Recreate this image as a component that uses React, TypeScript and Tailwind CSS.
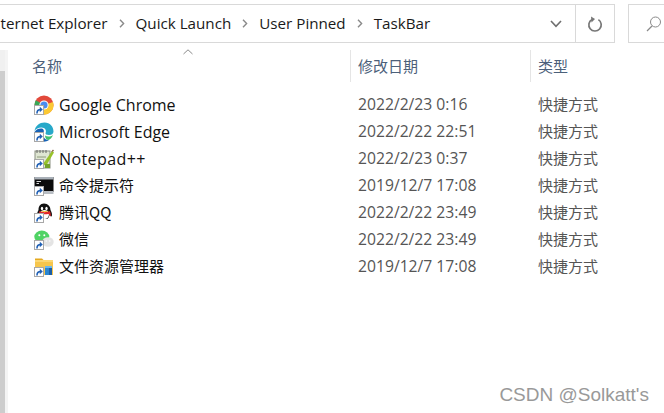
const ShortcutArrow = () => (
  <span className="absolute left-0 bottom-0 w-[10px] h-[10px] bg-white border border-[#a8a8a8] flex items-center justify-center">
    <svg width="8" height="8" viewBox="0 0 8 8">
      <path d="M1.2 7.4 C1.2 4.5 2.4 3 4.8 2.8 L4.8 0.8 L7.8 3.6 L4.8 6.2 L4.8 4.4 C3.6 4.4 2.8 5.2 2.8 7.4 Z" fill="#1f5fb4" />
    </svg>
  </span>
);

const ChromeIcon = () => (
  <svg width="20" height="20" viewBox="0 0 20 20">
    <circle cx="10" cy="10" r="9.5" fill="#e2493b" />
    <path d="M10 10 L1.8 5.2 A9.5 9.5 0 0 0 7 19 Z" fill="#3aa757" />
    <path d="M10 10 L19 7 A9.5 9.5 0 0 1 7 19.2 Z" fill="#fbc934" />
    <circle cx="10" cy="10" r="4.6" fill="#ffffff" />
    <circle cx="10" cy="10" r="3.6" fill="#4a8cf0" />
  </svg>
);

const EdgeIcon = () => (
  <svg width="20" height="20" viewBox="0 0 20 20">
    <path d="M0.5 9 C1.5 3.5 5.5 0.5 10.5 0.5 C16 0.5 19.5 4.5 19.5 9.5 C19.5 12 17.5 13 15 13 C12.5 13 11 12.3 11.6 11 C12.8 8.5 11 5.5 7.5 5.5 C4.5 5.5 2 7 0.5 9 Z" fill="#27a8c9" />
    <path d="M0.5 10 C2 7.5 4.5 6.5 7 6.5 C9.5 6.5 10.5 8.5 9.5 11 C8.5 14 10.5 18.5 15 18 C13.5 19.2 11.5 19.7 9.8 19.7 C4.5 19.7 0.5 15.5 0.5 10 Z" fill="#1763b6" />
    <path d="M11 13.5 C13 15 16.5 15 19 13 C18 15.5 16.5 17.5 14.5 18 C12.5 18 11 16 11 13.5 Z" fill="#3fc26f" />
  </svg>
);

const NotepadIcon = () => (
  <svg width="20" height="20" viewBox="0 0 20 20">
    <rect x="1" y="2" width="15" height="17" fill="#dfe6d2" stroke="#8a8f80" strokeWidth="1" />
    <path d="M3 1 V4 M6 1 V4 M9 1 V4 M12 1 V4" stroke="#666" strokeWidth="1" />
    <path d="M3 8 H12 M3 11 H10 M3 14 H11" stroke="#8d9a7b" strokeWidth="1" />
    <path d="M9 15 L18 2 L20 3.5 L12 17 Z" fill="#98c22a" />
    <path d="M17 3 L19 0.5 L20 2 Z" fill="#7a4b22" />
    <rect x="11" y="15" width="5" height="4" fill="#74a32a" />
  </svg>
);

const CmdIcon = () => (
  <svg width="20" height="20" viewBox="0 0 20 20">
    <rect x="0.5" y="1" width="19" height="15" fill="#0b0b0b" />
    <rect x="0.5" y="1" width="19" height="2.5" fill="#a9b0b8" />
    <path d="M2.5 5.5 H7 M2.5 7.5 H5" stroke="#d8d8d8" strokeWidth="1" />
    <rect x="0.5" y="15" width="19" height="3" fill="#b9bec4" />
  </svg>
);

const QQIcon = () => (
  <svg width="20" height="20" viewBox="0 0 20 20">
    <path d="M10 0.5 C6 0.5 4.5 3.5 4.5 7 C3 9.5 2.5 12.5 3.5 13.5 C4.5 13.5 5 12.5 5.5 12 C6 14.5 7 15.5 8 16 H13 C14 15.5 15 14.5 15.5 12 C16 12.5 16.5 13.5 17.5 13.5 C18.5 12.5 18 9.5 16.5 7 C16.5 3.5 14 0.5 10 0.5 Z" fill="#111111" />
    <ellipse cx="10.5" cy="11.5" rx="4.5" ry="4.5" fill="#ffffff" />
    <ellipse cx="8" cy="5.5" rx="1.2" ry="1.7" fill="#fff" />
    <ellipse cx="12.5" cy="5.5" rx="1.2" ry="1.7" fill="#fff" />
    <path d="M5.5 8 C8 9.5 13 9.5 16 8 L16.5 10 L17 13.5 L14.5 11 C11 11.5 8 11.5 5 10.5 Z" fill="#e2262a" />
    <path d="M7 7.5 C9 8.5 12.5 8.5 14.5 7.5 C12.5 9.5 9 9.5 7 7.5 Z" fill="#f5b417" />
  </svg>
);

const WeChatIcon = () => (
  <svg width="20" height="20" viewBox="0 0 20 20">
    <ellipse cx="7.8" cy="6.8" rx="7.5" ry="6.2" fill="#4fd364" />
    <path d="M4 11 L3.6 14.5 L7.5 12.5 Z" fill="#4fd364" />
    <circle cx="5.3" cy="5.3" r="1" fill="#fff" />
    <circle cx="10.3" cy="5.3" r="1" fill="#fff" />
    <ellipse cx="14" cy="12" rx="5.7" ry="4.8" fill="#e4e4e4" />
    <circle cx="12.2" cy="11" r="0.7" fill="#fff" />
    <circle cx="15.8" cy="11" r="0.7" fill="#fff" />
  </svg>
);

const FolderIcon = () => (
  <svg width="20" height="20" viewBox="0 0 20 20">
    <path d="M1 1.5 H8 L10 3.5 H1 Z" fill="#e5a91f" />
    <rect x="1" y="3" width="18" height="3" fill="#fbd774" />
    <rect x="1" y="5" width="18" height="13" fill="#f6c64d" />
    <rect x="11" y="9" width="4" height="9" fill="#2a86d1" />
    <rect x="15" y="9" width="3" height="9" fill="#1c5ea6" />
    <rect x="11" y="9" width="7" height="2" fill="#6db8ea" />
  </svg>
);

const files = [
  { name: "Google Chrome", date: "2022/2/23 0:16", font: "text-[16px] font-['Open_Sans']", icon: <ChromeIcon /> },
  { name: "Microsoft Edge", date: "2022/2/22 22:51", font: "text-[16px] font-['Open_Sans']", icon: <EdgeIcon /> },
  { name: "Notepad++", date: "2022/2/23 0:37", font: "text-[16px] tracking-[0.4px] font-['Open_Sans']", icon: <NotepadIcon /> },
  { name: "命令提示符", date: "2019/12/7 17:08", font: "text-[15px]", icon: <CmdIcon /> },
  { name: "腾讯QQ", date: "2022/2/22 23:49", font: "text-[15px]", icon: <QQIcon /> },
  { name: "微信", date: "2022/2/22 23:49", font: "text-[15px]", icon: <WeChatIcon /> },
  { name: "文件资源管理器", date: "2019/12/7 17:08", font: "text-[15px]", icon: <FolderIcon /> },
];

const crumbs = ["Quick Launch", "User Pinned", "TaskBar"];

const Chevron = () => (
  <svg width="6" height="9" viewBox="0 0 6 9" className="mx-[11px] shrink-0">
    <path d="M1 0.8 L4.6 4.5 L1 8.2" fill="none" stroke="#8a8a8a" strokeWidth="1.4" />
  </svg>
);

export default function App() {
  return (
    <div
      className="relative w-[664px] h-[413px] overflow-hidden bg-white text-[15px] text-black"
      style={{ fontFamily: '"Noto Sans CJK SC", "Open Sans", sans-serif' }}
    >
      {/* address bar */}
      <div className="flex items-stretch h-[39px] mt-[4px]">
        <div className="flex-1 min-w-0 flex border-y-[1.5px] border-r-[1.5px] border-[#d9d9d9]">
          <div className="flex-1 min-w-0 overflow-hidden flex items-center text-[#1a1a1a] font-['Open_Sans'] text-[15.2px]">
            <span className="-ml-[13px] whitespace-nowrap">Internet Explorer</span>
            <Chevron />
            {crumbs.map((c, i) => (
              <span key={c} className="flex items-center whitespace-nowrap">
                {c}
                {i < crumbs.length - 1 && <Chevron />}
              </span>
            ))}
          </div>
          <div className="w-[38px] flex items-center justify-center">
            <svg width="12" height="8" viewBox="0 0 12 8">
              <path d="M1 1 L6 6.4 L11 1" fill="none" stroke="#6f6f6f" strokeWidth="1.6" />
            </svg>
          </div>
          <div className="w-[39px] flex items-center justify-center border-l-[1.5px] border-[#d9d9d9]">
            <svg width="16" height="16" viewBox="0 0 16 16">
              <path d="M5 3.4 A6.2 6.2 0 1 0 11.4 3.6" fill="none" stroke="#777" strokeWidth="1.7" />
              <path d="M4 0.5 L8 3 L4.5 6.4 Z" fill="#777" />
            </svg>
          </div>
        </div>
        <div className="w-[36px] ml-[13px] flex items-center border-y-[1.5px] border-l-[1.5px] border-[#d9d9d9] pl-[17px] shrink-0">
          <svg width="16" height="16" viewBox="0 0 16 16">
            <circle cx="9.5" cy="6" r="5" fill="none" stroke="#8a8a8a" strokeWidth="1" />
            <path d="M6 10 L1 15" stroke="#8a8a8a" strokeWidth="1.2" />
          </svg>
        </div>
      </div>

      {/* content */}
      <div className="flex h-[370px]">
        <div className="w-[8px] shrink-0 flex flex-col mt-[7px] border-r-[3px] border-[#f4f4f4]">
          <div className="h-[21px] bg-[#f0f0f0]" />
          <div className="flex-1 bg-[#cdcdcd]" />
        </div>

        <div className="flex-1 min-w-0 pl-[1px]">
          <div className="relative flex h-[32px] mt-[7px] text-[#4c607a] text-[15px]">
            <div className="w-[342px] pl-[23px] flex items-center border-r border-[#e5e5e5]">名称</div>
            <div className="w-[180px] pl-[7px] flex items-center border-r border-[#e5e5e5]">修改日期</div>
            <div className="pl-[7px] flex items-center">类型</div>
            <svg width="10" height="6" viewBox="0 0 10 6" className="absolute left-[174px] -top-[1px]">
              <path d="M0.5 5 L5 0.8 L9.5 5" fill="none" stroke="#8a8a8a" strokeWidth="1" />
            </svg>
          </div>

          <div className="mt-[9px] flex flex-col">
            {files.map((f) => (
              <div key={f.name} className="flex items-center h-[27px]">
                <div className="w-[349px] flex items-center pl-[25px] gap-[5px]">
                  <span className="relative w-[20px] h-[20px] shrink-0">
                    {f.icon}
                    <ShortcutArrow />
                  </span>
                  <span className={"whitespace-nowrap text-[#111] " + f.font}>{f.name}</span>
                </div>
                <div className="w-[180px] text-[#555] text-[15.7px] font-['Open_Sans']">{f.date}</div>
                <div className="text-[#555] text-[15px]">快捷方式</div>
              </div>
            ))}
          </div>
        </div>
      </div>

      <div className="absolute right-[15px] bottom-[9px] text-[#999] text-[19px] leading-none font-['Liberation_Sans']">
        CSDN @Solkatt's
      </div>
    </div>
  );
}
